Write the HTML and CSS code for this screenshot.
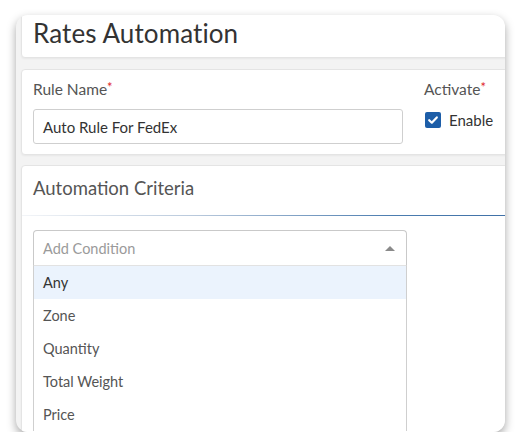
FILE: index.html
```html
<!DOCTYPE html>
<html lang="en">

<head>
  <meta charset="UTF-8">
  <meta name="viewport" content="width=device-width, initial-scale=1.0">
  <link rel="stylesheet" href="styles.css">
</head>

<body>
  <div class="app-window">
    <div class="card title-card">
      <h1 class="page-title">Rates Automation</h1>
    </div>

    <div class="card rule-card">
      <div class="field field-name">
        <label class="field-label">Rule Name<span class="required">*</span></label>
        <div class="text-input">Auto Rule For FedEx</div>
      </div>
      <div class="field field-activate">
        <label class="field-label">Activate<span class="required">*</span></label>
        <div class="check-row">
          <span class="checkbox">
            <svg width="12" height="12" viewBox="0 0 12 12">
              <path d="M2.2 6.2 L4.8 8.7 L9.8 3.4" fill="none" stroke="#fff" stroke-width="2.2" stroke-linecap="round" stroke-linejoin="round" />
            </svg>
          </span>
          <span class="check-label">Enable</span>
        </div>
      </div>
    </div>

    <div class="card criteria-card">
      <div class="criteria-header">Automation Criteria</div>
      <div class="criteria-body">
        <div class="select">
          <div class="select-control">
            <span class="select-placeholder">Add Condition</span>
            <span class="select-caret"></span>
          </div>
          <ul class="select-menu">
            <li class="select-option active">Any</li>
            <li class="select-option">Zone</li>
            <li class="select-option">Quantity</li>
            <li class="select-option">Total Weight</li>
            <li class="select-option">Price</li>
          </ul>
        </div>
      </div>
    </div>
  </div>
</body>

</html>
```

FILE: styles.css
```css
body {
  font-family: Lato, "Open Sans", sans-serif;
  background-color: #fff;
  margin: 0;
  padding: 15px 0 0 16px;
}

.app-window {
  width: 489px;
  height: 417px;
  background-color: #f3f3f3;
  border-radius: 12px;
  box-shadow: 0 4px 10px rgba(0, 0, 0, 0.35);
  overflow: hidden;
  padding-left: 5px;
  box-sizing: border-box;
  display: flex;
  flex-direction: column;
}

.card {
  background-color: #fff;
  border: 1px solid #e4e4e4;
  border-radius: 4px;
  margin-right: -10px;
  box-shadow: 0 1px 2px rgba(0, 0, 0, 0.05);
  box-sizing: border-box;
  flex-shrink: 0;
}

.title-card {
  margin-top: -5px;
  height: 48px;
  padding-left: 11px;
  display: flex;
  align-items: center;
}

.page-title {
  margin: -2px 0 0;
  font-size: 26px;
  font-weight: 400;
  color: #333;
  letter-spacing: 0.1px;
}

.rule-card {
  margin-top: 11px;
  height: 86px;
  padding: 10px 0 0 11px;
  display: flex;
}

.field {
  display: flex;
  flex-direction: column;
}

.field-name {
  width: 370px;
}

.field-activate {
  margin-left: 21px;
}

.field-label {
  font-size: 15.5px;
  color: #555;
  height: 19px;
  line-height: 19px;
}

.required {
  color: #e0262b;
  font-size: 13px;
  vertical-align: top;
  line-height: 14px;
}

.text-input {
  margin-top: 10px;
  height: 35px;
  border: 1px solid #cfcfcf;
  border-radius: 3px;
  box-sizing: border-box;
  padding-left: 9px;
  display: flex;
  align-items: center;
  font-size: 15px;
  color: #333;
}

.check-row {
  display: flex;
  align-items: center;
  margin-top: 12px;
  gap: 8px;
}

.checkbox {
  width: 16px;
  height: 16px;
  margin-left: 1px;
  background-color: #1d5ea8;
  border-radius: 2px;
  display: flex;
  align-items: center;
  justify-content: center;
}

.check-label {
  font-size: 15px;
  color: #333;
}

.criteria-card {
  margin-top: 10px;
  flex: 1;
  margin-bottom: -10px;
}

.criteria-header {
  height: 50px;
  padding: 11px 0 0 11px;
  box-sizing: border-box;
  font-size: 18.5px;
  color: #555;
  border-bottom: 1px solid;
  border-image: linear-gradient(to right, #f3f5f8 0%, #b9c9dc 35%, #4c7db0 75%, #3f70a6 100%) 1;
}

.criteria-body {
  padding: 14px 0 0 11px;
}

.select {
  width: 374px;
}

.select-control {
  height: 36px;
  border: 1px solid #c9c9c9;
  border-bottom-color: #e2e2e2;
  border-radius: 4px 4px 0 0;
  box-sizing: border-box;
  display: flex;
  align-items: center;
  justify-content: space-between;
  padding: 0 11px 0 9px;
}

.select-placeholder {
  font-size: 14.5px;
  color: #9a9a9a;
}

.select-caret {
  width: 0;
  height: 0;
  border-left: 5px solid transparent;
  border-right: 5px solid transparent;
  border-bottom: 5px solid #8a8a8a;
}

.select-menu {
  list-style: none;
  margin: 0;
  padding: 0;
  border-left: 1px solid #cfcfcf;
  border-right: 1px solid #cfcfcf;
}

.select-option {
  height: 33px;
  line-height: 33px;
  padding-left: 9px;
  font-size: 14.5px;
  color: #555;
}

.select-option.active {
  background-color: #ebf3fd;
  color: #333;
}
```
